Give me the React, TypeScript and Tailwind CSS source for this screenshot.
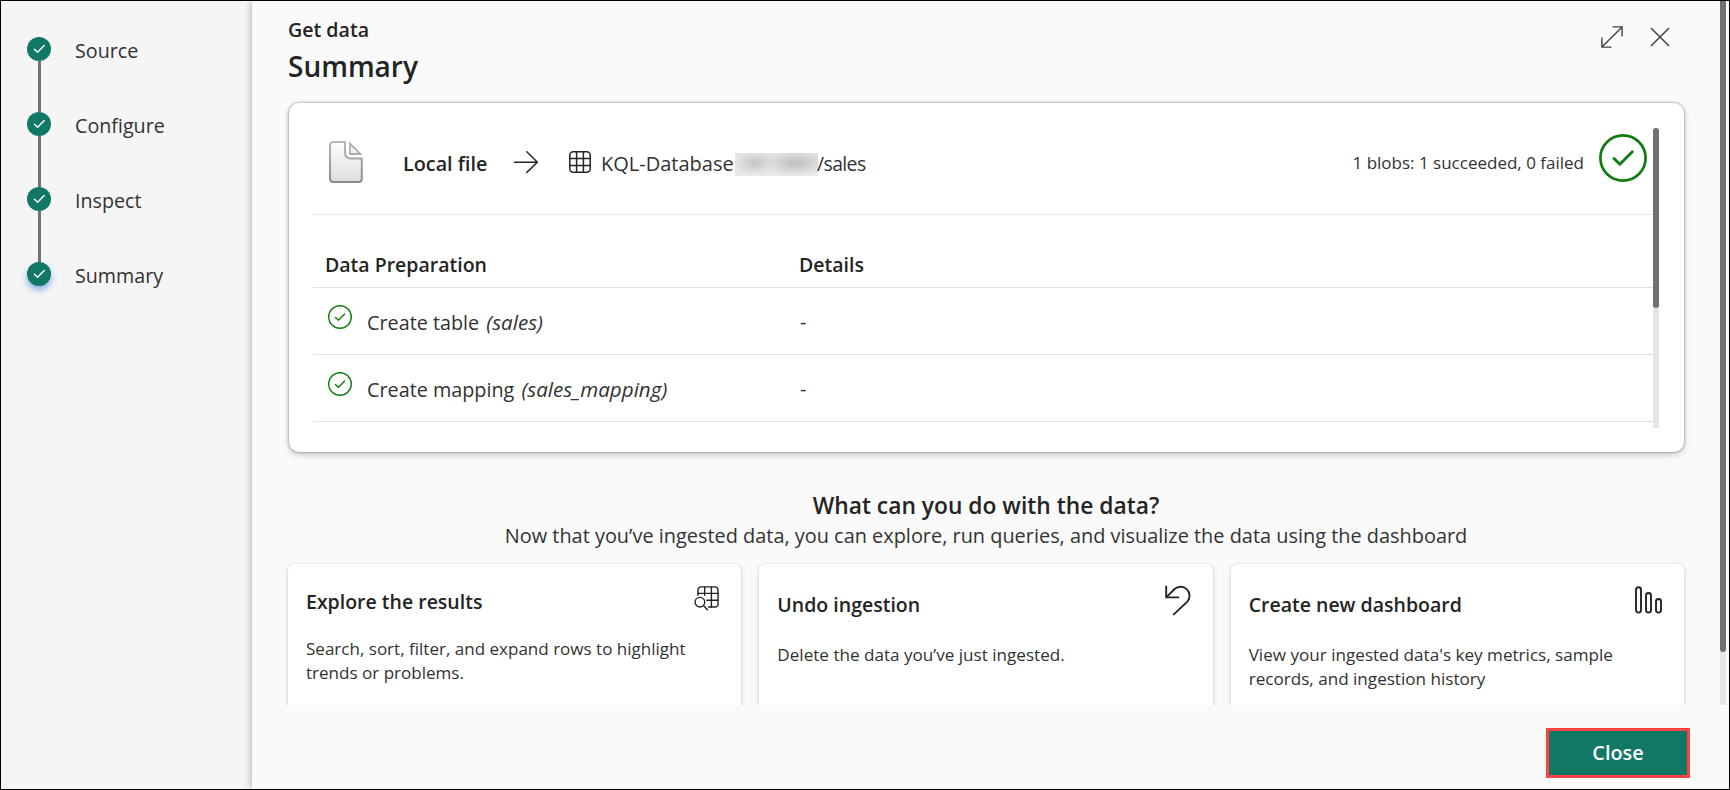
import type { ReactNode } from "react";

const steps = ["Source", "Configure", "Inspect", "Summary"];

function StepIcon({ active }: { active: boolean }) {
  return (
    <span
      className={
        active
          ? "flex size-6 shrink-0 items-center justify-center rounded-full bg-[#117865] shadow-[0_4px_6px_0_rgba(30,110,210,0.5)]"
          : "flex size-6 shrink-0 items-center justify-center rounded-full bg-[#117865]"
      }
    >
      <svg width="24" height="24" viewBox="0 0 24 24" fill="none" stroke="#fff" strokeWidth="1.4" strokeLinecap="round" strokeLinejoin="round">
        <path d="M7.4 12.2 10.6 15.2 17.2 8.4" />
      </svg>
    </span>
  );
}

function DocumentIcon() {
  return (
    <svg width="34" height="42" viewBox="0 0 34 42">
      <defs>
        <linearGradient id="docFill" x1="0" y1="0" x2="0" y2="1">
          <stop offset="0" stopColor="#fdfdfd" />
          <stop offset="1" stopColor="#dedede" />
        </linearGradient>
        <linearGradient id="docLine" x1="0" y1="0" x2="0" y2="1">
          <stop offset="0" stopColor="#b8b8b8" />
          <stop offset="1" stopColor="#8a8a8a" />
        </linearGradient>
      </defs>
      <path
        d="M4.5 1H16V11.5Q16 17.5 22 17.5H32.8V37.5Q32.8 41 29.3 41H4.5Q1 41 1 37.5V4.5Q1 1 4.5 1Z"
        fill="url(#docFill)"
        stroke="url(#docLine)"
        strokeWidth="2"
      />
      <path d="M21 2.6V13H31.4Z" fill="#f2f2f2" stroke="#adadad" strokeWidth="1.8" />
    </svg>
  );
}

function CheckCircle() {
  return (
    <svg className="shrink-0" width="24" height="24" viewBox="0 0 24 24" fill="none" stroke="#107c10" strokeLinecap="round" strokeLinejoin="round">
      <circle cx="12" cy="12" r="11.3" strokeWidth="1.4" />
      <path d="M7.5 12.4 10.5 15.2 16.6 9" strokeWidth="1.4" />
    </svg>
  );
}

function TableRow({ label, name }: { label: string; name: string }) {
  return (
    <div className="flex h-[67px] items-start border-b border-[#e0e0e0] pt-[17px] pl-[15px]">
      <div className="flex w-[472px]">
        <CheckCircle />
        <div className="mt-0.5 ml-[15px] text-[19.8px] leading-[30px]">
          {label} <em className="ml-0.5 text-[20.6px]">{name}</em>
        </div>
      </div>
      <div className="mt-0.5 text-[19.7px] leading-[30px]">-</div>
    </div>
  );
}

function ActionCard({ title, text, icon, compact }: { title: string; text: string; icon: ReactNode; compact?: boolean }) {
  return (
    <div className="flex h-[190px] justify-between rounded-md bg-white pr-[22px] pl-[18px] shadow-[0_0_2px_rgba(0,0,0,0.14),0_2px_5px_rgba(0,0,0,0.15)]">
      <div className={compact ? "w-[390px] pt-6" : "w-[376px] pt-[27px]"}>
        <h3 className="text-[19.5px] leading-7 font-semibold text-[#242424]">{title}</h3>
        <p className={compact ? "mt-[21px] text-[17.05px] leading-6" : "mt-6 text-[17.1px] leading-6"}>{text}</p>
      </div>
      <div className={compact ? "-ml-6 pt-[22px]" : "pt-[21px]"}>{icon}</div>
    </div>
  );
}

export default function App() {
  return (
    <div className="flex h-[790px] w-[1730px] overflow-hidden border border-black bg-[#fafafa] font-['Open_Sans','Noto_Sans',sans-serif] text-[#323232]">
      <nav className="w-[251px] shrink-0 bg-[#f5f5f5] pt-9 pl-[26px]">
        {steps.map((step, i) => (
          <div key={step} className="flex h-[75px]">
            <div className="flex w-6 flex-col items-center">
              <StepIcon active={i === steps.length - 1} />
              {i < steps.length - 1 && <div className="ml-px w-[3px] flex-1 bg-[#737373]" />}
            </div>
            <div className="ml-[24px] pt-0.5 text-[19.7px] leading-6">{step}</div>
          </div>
        ))}
      </nav>

      <main className="z-10 flex min-w-0 flex-1 flex-col bg-[#fafafa] shadow-[0_0_8px_rgba(0,0,0,0.32)]">
        <div className="flex h-[704px] overflow-hidden">
          <div className="w-[1468px] shrink-0 pt-3.5 pl-9">
            <header className="flex w-[1396px] justify-between">
              <div className="pt-px text-[#242424]">
                <div className="text-[19.6px] leading-7 font-semibold">Get data</div>
                <h1 className="mt-1 text-[28px] leading-9 font-semibold">Summary</h1>
              </div>
              <div className="mr-[14px] flex gap-[26px] pt-[10px]">
                <svg width="24" height="24" viewBox="0 0 24 24" fill="none" stroke="#424242" strokeWidth="1.4">
                  <path d="M12.5 1.9H22.1V11.5M1.9 12.5V22.1H11.5M1.9 22.1 22.1 1.9" />
                </svg>
                <svg width="20" height="24" viewBox="0 0 20 24" fill="none" stroke="#424242" strokeWidth="1.5">
                  <path d="M1 3 19 21M19 3 1 21" />
                </svg>
              </div>
            </header>

            <section className="mt-[19px] ml-px h-[349px] w-[1395px] rounded-[10px] bg-white pt-[25px] pl-[24px] shadow-[0_0_3px_rgba(0,0,0,0.45),0_3px_7px_rgba(0,0,0,0.18)]">
              <div className="flex h-[300px] w-[1346px]">
                <div className="w-[1340px]">
                  <div className="flex h-[87px] items-start border-b border-[#e8e8e8] pl-4">
                    <div className="mt-[13px] shrink-0">
                      <DocumentIcon />
                    </div>
                    <div className="mt-[21px] ml-[40px] w-[110px] text-[19.8px] leading-[30px] font-semibold text-[#242424]">Local file</div>
                    <svg className="mt-[22px] shrink-0" width="26" height="24" viewBox="0 0 26 24" fill="none" stroke="#242424" strokeWidth="1.5" strokeLinecap="round" strokeLinejoin="round">
                      <path d="M1.6 12.2H24.4M13.8 1.7 24.4 12.2 13.8 22.4" />
                    </svg>
                    <svg className="mt-[23px] ml-[30px] shrink-0" width="22" height="22" viewBox="0 0 22 22" fill="none" stroke="#242424" strokeWidth="1.5">
                      <rect x="0.8" y="0.8" width="20.4" height="20.4" rx="3.4" />
                      <path d="M7.6 1V21M14.4 1V21M1 7.6H21M1 14.4H21" />
                    </svg>
                    <div className="mt-[21px] ml-[10px] flex text-[20px] leading-[30px]">
                      <span className="w-[134px]">KQL-Database</span>
                      <span className="mt-1 h-[23px] w-[83px] bg-[radial-gradient(ellipse_20px_12px_at_20px_10px,#c6c6c6_0%,transparent_100%),radial-gradient(ellipse_32px_13px_at_60px_10px,#bfbfbf_0%,transparent_100%),linear-gradient(#e4e4e4,#e9e9e9)]" />
                      <span className="-ml-px text-[19.4px] tracking-[-0.6px]">/sales</span>
                    </div>
                    <div className="mt-[23px] mr-[15px] ml-auto text-[17px] leading-6 text-[#323232]">1 blobs: 1 succeeded, 0 failed</div>
                    <svg className="mt-[6px] mr-1.5 shrink-0" width="48" height="48" viewBox="0 0 48 48" fill="none" stroke="#107c10" strokeLinecap="round" strokeLinejoin="round">
                      <circle cx="24" cy="24" r="22.6" strokeWidth="2.7" />
                      <path d="M15 24.5 20.8 30.3 33.3 17.8" strokeWidth="2.9" />
                    </svg>
                  </div>
                  <div className="flex h-[73px] items-end border-b border-[#e0e0e0] pb-[7px] pl-3 text-[19.5px] leading-[30px] font-semibold text-[#242424]">
                    <div className="w-[474px]">Data Preparation</div>
                    <div>Details</div>
                  </div>
                  <TableRow label="Create table" name="(sales)" />
                  <TableRow label="Create mapping" name="(sales_mapping)" />
                </div>
                <div className="w-1.5 rounded-t-full bg-[#e6e6e6]">
                  <div className="h-[180px] rounded-full bg-[#707070]" />
                </div>
              </div>
            </section>

            <section className="mt-[38px] w-[1396px]">
              <h2 className="text-center text-[22.8px] leading-[31px] font-semibold text-[#242424]">What can you do with the data?</h2>
              <p className="text-center text-[19.92px] leading-[30px] whitespace-nowrap">
                Now that you’ve ingested data, you can explore, run queries, and visualize the data using the dashboard
              </p>
              <div className="mt-[13px] grid grid-cols-3 gap-[18px]">
                <ActionCard
                  compact
                  title="Explore the results"
                  text="Search, sort, filter, and expand rows to highlight trends or problems."
                  icon={
                    <svg width="25" height="25" viewBox="0 0 25 25" fill="none" stroke="#242424" strokeWidth="1.4" strokeLinecap="round">
                      <path d="M4 9.2V4.2Q4 .9 7.3 .9H20.7Q24 .9 24 4.2V17.7Q24 21 20.7 21H14.6" />
                      <path d="M10.7 1V9.2M17.4 1V21M4 7.4H24M12.8 14.3H24" />
                      <circle cx="5.9" cy="16.2" r="4.8" />
                      <path d="M9.4 19.6 13.4 23.8" />
                    </svg>
                  }
                />
                <ActionCard
                  title="Undo ingestion"
                  text="Delete the data you’ve just ingested."
                  icon={
                    <svg className="-mr-px" width="27" height="31" viewBox="0 0 27 31" fill="none" stroke="#242424" strokeWidth="1.9" strokeLinecap="round" strokeLinejoin="round">
                      <path d="M1.2 1.4V12.4H13.4" />
                      <path d="M1.8 11.8 9.6 4A9 9 0 0 1 22.4 16.6L8.8 29.4" />
                    </svg>
                  }
                />
                <ActionCard
                  title="Create new dashboard"
                  text="View your ingested data's key metrics, sample records, and ingestion history"
                  icon={
                    <svg className="mt-px" width="27" height="28" viewBox="0 0 27 28" fill="none" stroke="#242424" strokeWidth="1.9">
                      <rect x="1" y="1.2" width="5" height="25.4" rx="2.5" />
                      <rect x="11" y="7" width="5" height="19.6" rx="2.5" />
                      <rect x="21" y="13" width="5" height="13.6" rx="2.5" />
                    </svg>
                  }
                />
              </div>
            </section>
          </div>
          <div className="w-1.5 shrink-0 bg-[#e6e6e6]">
            <div className="h-[651px] rounded-b-full bg-[#707070]" />
          </div>
        </div>
        <footer className="flex justify-end pt-[23px] pr-[39px]">
          <button className="h-[50px] w-36 border-[3px] border-[#ff4343] bg-[#117865] text-[19.9px] leading-[30px] font-semibold text-white">Close</button>
        </footer>
      </main>
    </div>
  );
}
